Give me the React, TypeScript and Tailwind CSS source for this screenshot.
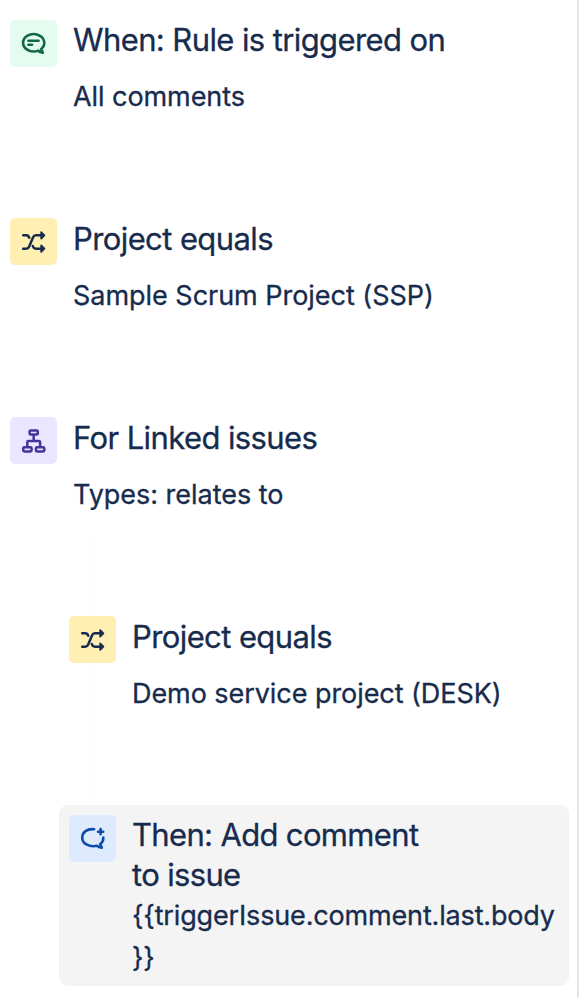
import React from "react";

const CommentIcon = () => (
  <svg viewBox="0 0 47 47" className="size-full" fill="none" stroke="#136745" strokeWidth="2.6" strokeLinecap="round" strokeLinejoin="round">
    <path d="M31.2 28.9A10.6 8.7 0 1 0 28.3 30.6Q29.6 32.2 32.8 32.7L31.2 28.9" />
    <path d="M18.4 20.7h10.2M18.4 24.7h3.6" />
  </svg>
);

const ShuffleIcon = () => (
  <svg viewBox="0 0 47 47" className="size-full" fill="none" stroke="#172b4d" strokeWidth="2.5" strokeLinecap="round" strokeLinejoin="round">
    <path d="M13.2 30.7h3.1q2 0 2.8-1.9l4-9.6q.8-1.9 2.8-1.9h6" />
    <path d="M13.2 17.3h3.1q2.1 0 2.9 2.4M22.8 28q.8 2.7 3.1 2.7h6" />
    <path d="M31.2 14.1l3.2 3.2-3.2 3.2zM31.2 27.5l3.2 3.2-3.2 3.2z" fill="#172b4d" strokeWidth="1.8" />
  </svg>
);

const BranchIcon = () => (
  <svg viewBox="0 0 47 47" className="size-full" fill="none" stroke="#44349c" strokeWidth="2.5" strokeLinejoin="round">
    <rect x="19.6" y="13.4" width="8.2" height="4.2" rx="1.2" />
    <rect x="13.2" y="30.2" width="8.4" height="4.2" rx="1.2" />
    <rect x="25.9" y="30.2" width="8.4" height="4.2" rx="1.2" />
    <path d="M23.7 17.5v6.5M17.3 30.3v-5.1q0-1.2 1.2-1.2h10.4q1.2 0 1.2 1.2v5.1" />
  </svg>
);

const AddCommentIcon = () => (
  <svg viewBox="0 0 47 47" className="size-full" fill="none" stroke="#0e4caa" strokeWidth="2.6" strokeLinecap="round" strokeLinejoin="round">
    <path d="M25.2 14.2C18.2 13.4 13.2 17.3 13.2 22.7C13.2 28.4 19.5 32.4 28.3 30.8Q29.6 32.2 32.8 32.7L31.2 29Q34.6 26.5 34.3 22.6" />
    <path d="M31.6 14.1v5.2M29 16.7h5.2" />
  </svg>
);

const steps = [
  {
    Icon: CommentIcon,
    Title: "When: Rule is triggered on",
    Text: "All comments",
    TextStyle: "tracking-[-0.07px]",
    TileStyle: "bg-[#e3fcef]",
    RowStyle: "pl-[10px]",
  },
  {
    Icon: ShuffleIcon,
    Title: "Project equals",
    Text: "Sample Scrum Project (SSP)",
    TextStyle: "tracking-[-0.03px]",
    TileStyle: "bg-[#ffefb3]",
    RowStyle: "pl-[10px]",
  },
  {
    Icon: BranchIcon,
    Title: "For Linked issues",
    Text: "Types: relates to",
    TextStyle: "tracking-[-0.03px]",
    TileStyle: "bg-[#eae6ff]",
    RowStyle: "pl-[10px]",
  },
  {
    Icon: ShuffleIcon,
    Title: "Project equals",
    Text: "Demo service project (DESK)",
    TextStyle: "tracking-[-0.06px]",
    TileStyle: "bg-[#ffefb3]",
    RowStyle: "pl-[69px]",
  },
];

const App = () => {
  return (
    <div className="relative h-[998px] w-[579px] overflow-hidden border-r-2 border-[#e4e4e4] bg-white pt-[19.7px] font-['Inter',sans-serif] text-[#172b4d] [-webkit-text-stroke:0.3px_#172b4d]">
      {/* connector behind the nested steps */}
      <div className="absolute top-[530px] left-[93px] h-[275px] border-l-2 border-dotted border-[#fcfcfc]" />
      {steps.map((step, index) => (
        <div key={index} className={`relative flex h-[198.75px] gap-4 ${step.RowStyle}`}>
          <div className={`size-[47px] shrink-0 rounded-[5px] ${step.TileStyle}`}>
            <step.Icon />
          </div>
          <div className="pt-[0.6px] whitespace-nowrap">
            <h2 className="text-[31px] leading-[40px] tracking-[-0.6px]">{step.Title}</h2>
            <p className={`mt-[17.1px] text-[27px] leading-[40px] ${step.TextStyle}`}>{step.Text}</p>
          </div>
        </div>
      ))}
      <div className="relative mt-[-10px] ml-[59px] flex h-[181px] w-[510px] gap-4 rounded-[9px] bg-[#f4f4f4] p-[10px]">
        <div className="size-[47px] shrink-0 rounded-[5px] bg-[#deebff]">
          <AddCommentIcon />
        </div>
        <div className="whitespace-nowrap">
          <h2 className="text-[31px] leading-[40px] tracking-[-0.66px]">
            Then: Add comment
            <br />
            to issue
          </h2>
          <p className="text-[27px] leading-[42px] tracking-[-0.16px]">
            {"{{triggerIssue.comment.last.body"}
            <br />
            {"}}"}
          </p>
        </div>
      </div>
    </div>
  );
};

export default App;
